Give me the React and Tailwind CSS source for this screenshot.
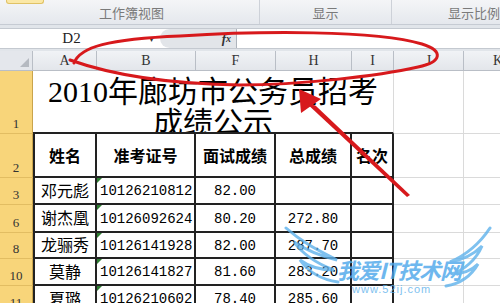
import React from 'react';

const serif = { fontFamily: '"Liberation Serif", "Noto Sans CJK SC", serif' };
const mono = { fontFamily: '"Liberation Mono", "Noto Sans CJK SC", monospace' };

const rows = [
    { num: '3', h: 'h-[27px]', name: '邓元彪', id: '10126210812', score: '82.00', total: '' },
    { num: '6', h: 'h-[28px]', name: '谢杰凰', id: '10126092624', score: '80.20', total: '272.80' },
    { num: '8', h: 'h-[26px]', name: '龙骊秀', id: '10126141928', score: '82.00', total: '287.70' },
    { num: '10', h: 'h-[27px]', name: '莫静', id: '10126141827', score: '81.60', total: '283.20' },
    { num: '11', h: 'h-[27px]', name: '夏璐', id: '10126210602', score: '78.40', total: '285.60' },
];

const colHeads = [
    { label: 'A', w: 'w-[64px]' },
    { label: 'B', w: 'w-[99px]' },
    { label: 'F', w: 'w-[80px]' },
    { label: 'H', w: 'w-[76px]' },
    { label: 'I', w: 'w-[42px]' },
    { label: 'J', w: 'w-[70px]' },
    { label: 'K', w: 'w-[69px]' },
];

const RowHead = ({ num, h }) => (
    <div className={`${h} w-[33px] shrink-0 bg-[#f8d57a] border-r border-b border-r-[#c9a44c] border-b-[#e2bd62] flex items-end justify-center text-[13px] leading-none pb-[3px] text-[#333]`} style={serif}>
        {num}
    </div>
);

const Grey = ({ w }) => <div className={`${w} shrink-0 border-r border-b border-[#dadada]`} />;

const App = () => {
    return (
        <div className="relative w-[500px] h-[303px] overflow-hidden bg-white">
            {/* ribbon group labels */}
            <div className="relative flex h-[25px] bg-gradient-to-b from-[#f4f5f7] to-[#e5e8ed] border-b border-[#c6cbd3] text-[13px] text-[#7a7a7a]" style={{ fontFamily: '"Noto Sans CJK SC", sans-serif' }}>
                <div className="absolute left-[6px] top-0 w-[38px] h-[4px] bg-[#fbe8a6] border border-t-0 border-[#e0c266] rounded-b-[3px]" />
                <div className="w-[268px] flex items-end justify-center pb-[2px] pl-[4px] border-r border-[#cdd1d8]">工作簿视图</div>
                <div className="w-[136px] flex items-end justify-center pb-[2px] border-r border-[#cdd1d8]">显示</div>
                <div className="flex-1 flex items-end pb-[2px] pl-[56px] whitespace-nowrap">显示比例</div>
            </div>
            <div className="h-[3px] bg-[#e1e5ea]" />

            {/* formula bar */}
            <div className="flex h-[21px] bg-white border-y border-[#c4c9d0]">
                <div className="w-[143px] flex items-center justify-center text-[15px] text-[#222]" style={serif}>D2</div>
                <div className="w-[17px] flex items-center justify-center text-[10px] text-[#333]">▾</div>
                <div className="w-[77px] bg-[#e2e5e9] rounded-l-[10px] border-r border-[#aeb4bc] flex items-center justify-end pr-[5px] text-[13px] italic font-bold text-[#333]" style={serif}>
                    <span>f</span><span className="text-[10px]">x</span>
                </div>
                <div className="flex-1" />
            </div>
            <div className="h-[2px] bg-[#e1e5ea]" />

            {/* column headers */}
            <div className="flex h-[20px]">
                <div className="relative w-[33px] shrink-0 bg-[#e4e7ec] border-r border-b border-[#b9bec6]">
                    <div className="absolute right-[3px] bottom-[3px] w-0 h-0" style={{ borderBottom: '9px solid #b5bac1', borderLeft: '9px solid transparent' }} />
                </div>
                {colHeads.map((c) => (
                    <div key={c.label} className={`${c.w} shrink-0 bg-gradient-to-b from-[#f1f3f6] to-[#e3e6eb] border-r border-b border-[#b9bec6] flex items-center justify-center text-[14px] text-[#333]`} style={serif}>
                        {c.label}
                    </div>
                ))}
            </div>

            {/* row 1 merged title */}
            <div className="flex">
                <RowHead num="1" h="h-[63px]" />
                <div className="w-[361px] h-[63px] shrink-0 border-r border-r-[#dadada] border-b-2 border-b-[#222] overflow-hidden text-center text-[30px] leading-[31px] pt-[5px] text-black" style={serif}>
                    2010年廊坊市公务员招考<br />成绩公示
                </div>
                <Grey w="w-[70px] h-[63px]" />
                <Grey w="w-[69px] h-[63px]" />
            </div>

            {/* row 2 header */}
            <div className="flex h-[44px]">
                <RowHead num="2" h="h-[44px]" />
                {['姓名', '准考证号', '面试成绩', '总成绩', '名次'].map((t, i) => (
                    <div key={t} className={`${['w-[64px] border-l-2', 'w-[99px]', 'w-[80px]', 'w-[76px]', 'w-[42px]'][i]} shrink-0 border-r-2 border-b-2 border-[#222] flex items-center justify-center pt-[4px] text-[16px] font-bold whitespace-nowrap text-black`} style={serif}>
                        {t}
                    </div>
                ))}
                <Grey w="w-[70px]" />
                <Grey w="w-[69px]" />
            </div>

            {/* data rows */}
            {rows.map((r) => (
                <div key={r.num} className={`flex ${r.h}`}>
                    <RowHead num={r.num} h={r.h} />
                    <div className="w-[64px] shrink-0 border-l-2 border-r-2 border-b-2 border-[#222] flex items-center justify-center pt-[2px] text-[16px] text-black" style={serif}>{r.name}</div>
                    <div className="relative w-[99px] shrink-0 border-r-2 border-b-2 border-[#222] flex items-center pl-[3px] pt-[2px] text-[14px] text-black" style={mono}>
                        <span className="absolute left-0 top-0 w-0 h-0 border-t-[5px] border-r-[5px] border-t-[#2e7d32] border-r-transparent" />
                        {r.id}
                    </div>
                    <div className="w-[80px] shrink-0 border-r-2 border-b-2 border-[#222] flex items-center justify-center pt-[2px] text-[14px] text-black" style={mono}>{r.score}</div>
                    <div className="w-[76px] shrink-0 border-r-2 border-b-2 border-[#222] flex items-center justify-center pt-[2px] text-[14px] text-black" style={mono}>{r.total}</div>
                    <div className="w-[42px] shrink-0 border-r-2 border-b-2 border-[#222]" />
                    <Grey w="w-[70px]" />
                    <Grey w="w-[69px]" />
                </div>
            ))}

            {/* red annotation */}
            <svg className="absolute inset-0 pointer-events-none" width="500" height="303" viewBox="0 0 500 303">
                <path d="M74 63 C80 47 108 39 180 36 C260 31 375 30 422 44 C444 51 442 62 418 67 C378 76 300 85 240 85 C170 84 112 75 70 60" fill="none" stroke="#d7191c" strokeWidth="3" strokeLinecap="round" />
                <polygon points="299,89 321,99 301,113" fill="#d7191c" />
                <polygon points="304,101 316,106 410,195 407,197" fill="#d7191c" />
            </svg>

            {/* watermark */}
            <div className="absolute left-[282px] top-[226px] w-[215px] h-[72px] pointer-events-none opacity-80">
                <svg className="absolute inset-0" width="215" height="72" viewBox="0 0 215 72">
                    <path d="M4 2 C22 18 40 26 55 34 C38 30 24 24 12 16 C22 30 36 38 52 44 C38 44 26 40 18 34 C28 48 42 54 56 56" fill="none" stroke="#5fb2ec" strokeWidth="3" strokeLinecap="round" />
                    <path d="M208 2 C196 20 182 30 168 36 C180 34 192 28 200 20 C194 34 182 44 170 48 C180 48 190 44 196 38 C188 52 176 58 164 60" fill="none" stroke="#5fb2ec" strokeWidth="3" strokeLinecap="round" />
                </svg>
                <div className="absolute left-[55px] top-[32px] text-[22px] leading-none font-bold italic text-[#4aa6ea] whitespace-nowrap tracking-[-1px]" style={{ fontFamily: '"Noto Sans CJK SC", sans-serif' }}>我爱IT技术网</div>
                <div className="absolute left-[70px] top-[58px] text-[11px] leading-none text-[#5fb2ec] whitespace-nowrap tracking-[1px]" style={{ fontFamily: '"Liberation Sans", sans-serif' }}>www.52ij.com</div>
            </div>
        </div>
    );
};

export default App;
